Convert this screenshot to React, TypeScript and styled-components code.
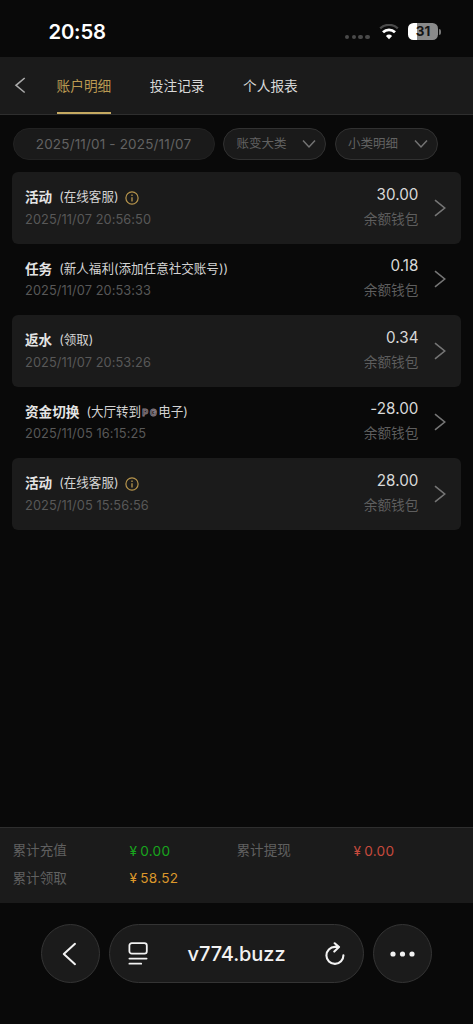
import React from "react";
import styled, { createGlobalStyle } from "styled-components";

const GlobalStyle = createGlobalStyle`
  *, *::before, *::after { box-sizing: border-box; }
  body {
    margin: 0;
    background: #090909;
    font-family: Inter, "Noto Sans CJK SC", sans-serif;
  }
`;

const Screen = styled.div`
  display: flex;
  flex-direction: column;
  width: 473px;
  height: 1024px;
  overflow: hidden;
  background: #090909;
  color: #dedede;
  white-space: nowrap;
`;

const StatusBar = styled.div`
  display: flex;
  align-items: center;
  height: 57px;
  padding: 6px 32px 0 48.5px;
`;

const Clock = styled.span`
  flex: 1;
  font-size: 20.3px;
  line-height: 24px;
  font-weight: 600;
  letter-spacing: -0.2px;
  color: #fff;
`;

const Signal = styled.div`
  display: flex;
  gap: 2.3px;
  margin: 11px 9px 0 0;
`;

const SignalDot = styled.i`
  width: 4.4px;
  height: 4.4px;
  border-radius: 50%;
  background: #4a4a4a;
`;

const Battery = styled.div`
  display: flex;
  align-items: center;
  justify-content: center;
  width: 30px;
  height: 17px;
  margin-left: 9.5px;
  border-radius: 5.5px;
  background: linear-gradient(90deg, #fff 31%, #8a8a8a 31%);
  color: #151515;
  font-size: 13.5px;
  line-height: 17px;
  font-weight: 700;
`;

const BatteryCap = styled.i`
  width: 2px;
  height: 6px;
  margin-left: 1px;
  border-radius: 0 2px 2px 0;
  background: #777;
`;

const Header = styled.header`
  display: flex;
  height: 58px;
  padding-left: 14px;
  background: #1b1b1b;
  border-bottom: 1.5px solid #2e2e2e;
`;

const BackIcon = styled.svg`
  width: 13px;
  height: 18px;
  margin: 19px 29.5px 0 0;
`;

const Tabs = styled.nav`
  display: flex;
  gap: 38.5px;
`;

const Tab = styled.span<{ $active?: boolean }>`
  height: 57px;
  padding-top: 18.5px;
  font-size: 13.7px;
  line-height: 20px;
  color: ${(p) => (p.$active ? "#bb9a52" : "#d8d8d8")};
  border-bottom: 2px solid ${(p) => (p.$active ? "#c5a961" : "transparent")};
`;

const Filters = styled.div`
  display: flex;
  gap: 8.5px;
  padding: 13px 12px 12.5px 12.5px;
`;

const FilterPill = styled.div<{ $w: number; $date?: boolean }>`
  display: flex;
  align-items: center;
  justify-content: ${(p) => (p.$date ? "center" : "space-between")};
  width: ${(p) => p.$w}px;
  height: 31.5px;
  padding: ${(p) => (p.$date ? "0" : "0 9px 0 12.5px")};
  border: 1px solid ${(p) => (p.$date ? "#222" : "#313131")};
  border-radius: 16px;
  background: #1a1a1a;
  color: #626262;
  font-size: ${(p) => (p.$date ? 13.5 : 12.5)}px;
  letter-spacing: ${(p) => (p.$date ? 0.17 : 0)}px;
  line-height: 20px;
`;

const List = styled.main`
  flex: 1;
  padding: 0 12px;
`;

const Row = styled.article<{ $filled: boolean }>`
  display: flex;
  align-items: center;
  height: 71.5px;
  padding: 0 15px 0 13px;
  border-radius: 6px;
  background: ${(p) => (p.$filled ? "#1b1b1b" : "transparent")};
`;

const Details = styled.div`
  flex: 1;
  padding-top: 1px;
`;

const TitleLine = styled.div`
  display: flex;
  align-items: center;
  height: 20px;
  padding-top: 1px;
`;

const Kind = styled.strong`
  margin-right: 7px;
  font-size: 13.6px;
  line-height: 20px;
  font-weight: 700;
  color: #e4e4e4;
`;

const Note = styled.span`
  font-size: 12.55px;
  line-height: 20px;
  color: #d4d4d4;
`;

const Provider = styled.span`
  display: inline-block;
  width: 17px;
  font-size: 9px;
  line-height: 9px;
  font-weight: 700;
  letter-spacing: 2px;
  padding-left: 1px;
  color: #17171c;
  -webkit-text-stroke: 0.9px #857a80;
`;

const InfoIcon = styled.svg`
  width: 14px;
  height: 14px;
  margin: 1px 0 0 6px;
`;

const Time = styled.div`
  margin-top: 3px;
  font-size: 12.8px;
  line-height: 20px;
  letter-spacing: 0.08px;
  color: #585858;
`;

const Money = styled.div`
  margin-right: 15.5px;
  text-align: right;
`;

const Amount = styled.div`
  height: 22px;
  font-size: 15.2px;
  line-height: 17px;
  letter-spacing: 0.05px;
  color: #d8d8d8;
`;

const Wallet = styled.div`
  font-size: 13.7px;
  line-height: 22px;
  color: #5e5e5e;
`;

const Summary = styled.footer`
  display: grid;
  grid-template-columns: 117px 107px 117px 1fr;
  grid-auto-rows: 27.5px;
  align-content: start;
  align-items: center;
  height: 76px;
  padding: 8.5px 12px 0 12.5px;
  border-top: 1.5px solid #2e2e2e;
  background: #1b1b1b;
  font-size: 13.6px;
  line-height: 20px;
`;

const Label = styled.span`
  color: #606060;
`;

const Total = styled.span<{ $color: string }>`
  color: ${(p) => p.$color};
  padding-top: 1px;
  letter-spacing: 0.25px;
  word-spacing: -1px;
`;

const BrowserBar = styled.div`
  display: flex;
  justify-content: space-between;
  height: 121px;
  padding: 21px 41px 0;
`;

const RoundButton = styled.button`
  display: flex;
  align-items: center;
  justify-content: center;
  width: 59px;
  height: 59px;
  padding: 0;
  border: 1px solid #343434;
  border-radius: 50%;
  background: #1b1b1b;
`;

const BackArrow = styled.svg`
  margin-right: 2px;
`;

const AddressBar = styled.div`
  display: flex;
  align-items: center;
  justify-content: space-between;
  width: 255px;
  height: 59px;
  padding: 0 18px;
  border: 1px solid #343434;
  border-radius: 30px;
  background: #1b1b1b;
  color: #f2f2f2;
  font-size: 20px;
  font-weight: 500;
  letter-spacing: -0.1px;
`;

const DownChevron = () => (
  <svg width="14" height="10" viewBox="0 0 14 10" fill="none" stroke="#747474" strokeWidth="1.5">
    <path d="M1 1.5 7 8l6-6.5" />
  </svg>
);

const RightChevron = () => (
  <svg width="12" height="18" viewBox="0 0 12 18" fill="none" stroke="#757575" strokeWidth="1.6">
    <path d="m1 1.2 9.7 7.8L1 16.8" />
  </svg>
);

const Info = () => (
  <InfoIcon viewBox="0 0 14 14" fill="none" stroke="#b6944c" strokeWidth="1.2">
    <circle cx="7" cy="7" r="6.1" />
    <path d="M7 6.2v4.2M7 3.6v1.3" strokeWidth="1.3" />
  </InfoIcon>
);

const records = [
  { kind: "活动", note: "(在线客服)", info: true, time: "2025/11/07 20:56:50", amount: "30.00" },
  { kind: "任务", note: "(新人福利(添加任意社交账号))", time: "2025/11/07 20:53:33", amount: "0.18" },
  { kind: "返水", note: "(领取)", time: "2025/11/07 20:53:26", amount: "0.34" },
  {
    kind: "资金切换",
    note: <>(大厅转到<Provider>PG</Provider>电子)</>,
    time: "2025/11/05 16:15:25",
    amount: "-28.00",
  },
  { kind: "活动", note: "(在线客服)", info: true, time: "2025/11/05 15:56:56", amount: "28.00" },
];

export default function App() {
  return (
    <>
      <GlobalStyle />
      <Screen>
        <StatusBar>
          <Clock>20:58</Clock>
          <Signal>
            <SignalDot />
            <SignalDot />
            <SignalDot />
            <SignalDot />
          </Signal>
          <svg width="20" height="16" viewBox="0 0 20 16" fill="none">
            <path d="M1.2 4.4a12.7 12.7 0 0 1 17.6 0" stroke="#4a4a4a" strokeWidth="2.3" />
            <path d="M4 8.3a8.6 8.6 0 0 1 12 0" stroke="#fff" strokeWidth="2.8" />
            <path d="M6.9 11.9a4.6 4.6 0 0 1 6.2 0L10 15.3Z" fill="#fff" />
          </svg>
          <Battery>31</Battery>
          <BatteryCap />
        </StatusBar>
        <Header>
          <BackIcon viewBox="0 0 13 18" fill="none" stroke="#aaa" strokeWidth="1.6">
            <path d="M10.7 2 2 9.3l8.7 7.2" />
          </BackIcon>
          <Tabs>
            <Tab $active>账户明细</Tab>
            <Tab>投注记录</Tab>
            <Tab>个人报表</Tab>
          </Tabs>
        </Header>
        <Filters>
          <FilterPill $w={202} $date>2025/11/01 - 2025/11/07</FilterPill>
          <FilterPill $w={103}>
            账变大类
            <DownChevron />
          </FilterPill>
          <FilterPill $w={103}>
            小类明细
            <DownChevron />
          </FilterPill>
        </Filters>
        <List>
          {records.map((r, i) => (
            <Row key={r.time} $filled={i % 2 === 0}>
              <Details>
                <TitleLine>
                  <Kind>{r.kind}</Kind>
                  <Note>{r.note}</Note>
                  {r.info && <Info />}
                </TitleLine>
                <Time>{r.time}</Time>
              </Details>
              <Money>
                <Amount>{r.amount}</Amount>
                <Wallet>余额钱包</Wallet>
              </Money>
              <RightChevron />
            </Row>
          ))}
        </List>
        <Summary>
          <Label>累计充值</Label>
          <Total $color="#18a51d">¥ 0.00</Total>
          <Label>累计提现</Label>
          <Total $color="#c74a3d">¥ 0.00</Total>
          <Label>累计领取</Label>
          <Total $color="#dc982b">¥ 58.52</Total>
        </Summary>
        <BrowserBar>
          <RoundButton aria-label="back">
            <BackArrow width="16" height="24" viewBox="0 0 16 24" fill="none" stroke="#f2f2f2" strokeWidth="2" strokeLinecap="round" strokeLinejoin="round">
              <path d="M13 1.8 1.8 12 13 22.2" />
            </BackArrow>
          </RoundButton>
          <AddressBar>
            <svg width="20" height="23" viewBox="0 0 20 23" fill="none" stroke="#f2f2f2" strokeWidth="1.8" strokeLinecap="round">
              <rect x="1.4" y="1.2" width="17.4" height="10.4" rx="2.4" />
              <path d="M1.4 16.6h17.2M1.4 21.7h11.8" />
            </svg>
            <span>v774.buzz</span>
            <svg width="20" height="24" viewBox="0 0 20 24" fill="none" stroke="#f2f2f2" strokeWidth="2.1" strokeLinecap="round" strokeLinejoin="round">
              <path d="M18.4 13.2a8.5 8.5 0 1 1-8.5-8.3h4M9.7 1.3l4.3 3.8-4.7 4.5" />
            </svg>
          </AddressBar>
          <RoundButton aria-label="more">
            <svg width="26" height="6" viewBox="0 0 26 6" fill="#f2f2f2">
              <circle cx="3" cy="3" r="2.6" />
              <circle cx="12.5" cy="3" r="2.6" />
              <circle cx="22" cy="3" r="2.6" />
            </svg>
          </RoundButton>
        </BrowserBar>
      </Screen>
    </>
  );
}
